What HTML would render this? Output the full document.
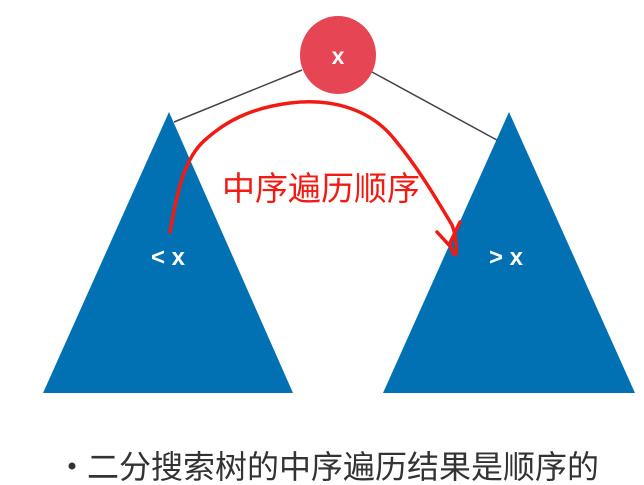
<!DOCTYPE html>
<html><head><meta charset="utf-8"><style>
html,body{margin:0;padding:0;background:#fff;width:644px;height:485px;overflow:hidden}
svg{position:absolute;left:0;top:0}
</style></head><body>
<svg width="644" height="485" viewBox="0 0 644 485">
<line x1="302" y1="70" x2="174" y2="122" stroke="#444" stroke-width="1.5"/>
<line x1="372" y1="72" x2="506" y2="145" stroke="#444" stroke-width="1.5"/>
<ellipse cx="338" cy="55" rx="38" ry="39" fill="#e64553"/>
<text x="338" y="64" font-family="Liberation Sans, sans-serif" font-weight="bold" font-size="23" fill="#fff" text-anchor="middle">x</text>
<polygon points="169,112 43,393 293,393" fill="#0171b3"/>
<polygon points="509,112 383,393 635,393" fill="#0171b3"/>
<text x="168" y="265" font-family="Liberation Sans, sans-serif" font-weight="bold" font-size="24" fill="#fff" text-anchor="middle">&lt; x</text>
<text x="506" y="265" font-family="Liberation Sans, sans-serif" font-weight="bold" font-size="24" fill="#fff" text-anchor="middle">&gt; x</text>
<path d="M170,232 C176,200 182,160 205,140 C225,122 250,108 290,103 C330,98 370,108 395,140 C420,170 440,205 452,225 C458,240 458,270 450,245" fill="none" stroke="#f21b14" stroke-width="3.5" stroke-linecap="round"/>
<path d="M437,232 L449,245 L460,222" fill="none" stroke="#f21b14" stroke-width="3.5" stroke-linecap="round"/>
<text x="222" y="200" font-family="Liberation Sans, 'Noto Sans CJK SC', sans-serif" font-size="33" fill="#f21b14">中序遍历顺序</text>
<circle cx="72" cy="466" r="3.5" fill="#333"/>
<text x="87" y="478" font-family="Liberation Sans, 'Noto Sans CJK SC', sans-serif" font-size="32" fill="#333">二分搜索树的中序遍历结果是顺序的</text>
</svg>
</body></html>
